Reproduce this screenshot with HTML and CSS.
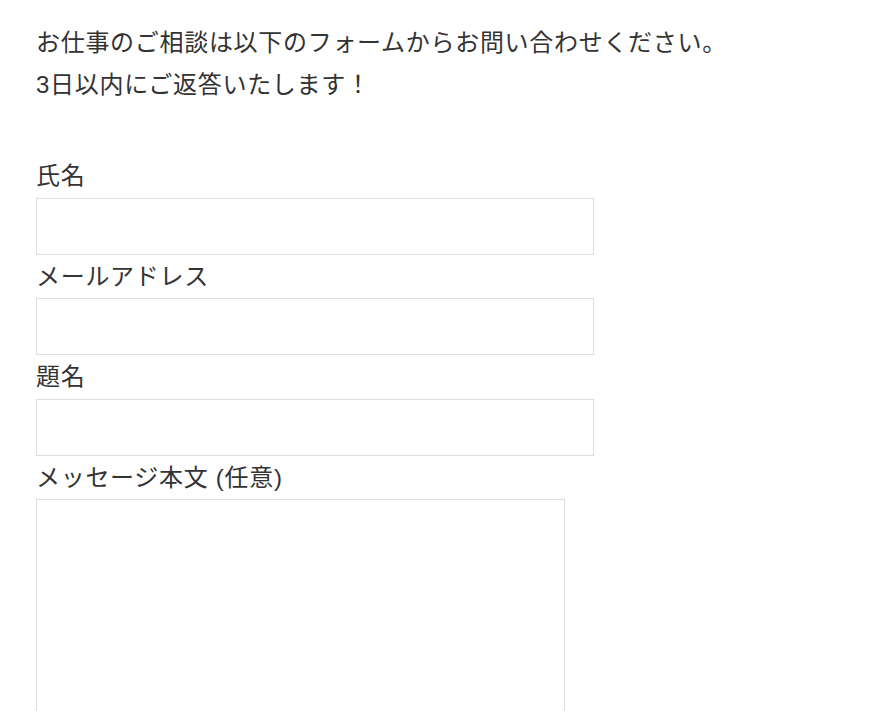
FILE: index.html
```html
<!DOCTYPE html>
<html lang="ja">
<head>
<meta charset="utf-8">
<link rel="stylesheet" href="styles.css">
</head>
<body>
<div class="page">
  <p class="intro">お仕事のご相談は以下のフォームからお問い合わせください。<br>3日以内にご返答いたします！</p>
  <form class="form">
    <label class="field"><span class="label">氏名</span><input class="input" type="text"></label>
    <label class="field"><span class="label">メールアドレス</span><input class="input" type="email"></label>
    <label class="field"><span class="label">題名</span><input class="input" type="text"></label>
    <label class="field"><span class="label">メッセージ本文 (任意)</span><textarea class="textarea"></textarea></label>
  </form>
</div>
</body>
</html>
```
FILE: styles.css
```css
html, body {
  margin: 0;
  padding: 0;
  background: #fff;
}
body {
  font-family: "Liberation Sans", "Noto Sans CJK JP", sans-serif;
  color: #333;
  font-size: 24px;
  letter-spacing: 0.7px;
}
.page {
  padding: 22px 0 0 36px;
}
.intro {
  margin: 0 0 48px;
  line-height: 42px;
}
.form {
  display: flex;
  flex-direction: column;
}
.field {
  display: flex;
  flex-direction: column;
  align-items: flex-start;
}
.label {
  display: block;
  line-height: 43.6px;
  height: 43.6px;
}
.input {
  box-sizing: border-box;
  width: 558px;
  height: 57px;
  border: 1px solid #ddd;
  margin: 0;
  padding: 0 8px;
  font: inherit;
  background: #fff;
}
.textarea {
  box-sizing: border-box;
  width: 529px;
  height: 260px;
  border: 1px solid #ddd;
  margin: 0;
  padding: 8px;
  font: inherit;
  resize: none;
  background: #fff;
}
```
